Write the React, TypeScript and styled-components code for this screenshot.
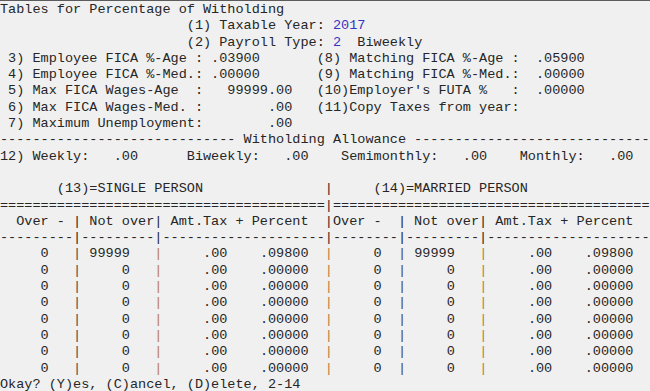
import React from 'react';
import styled, { createGlobalStyle } from 'styled-components';

type Seg = string | { t: string; kind: 'value' | 'pipe' | 'tint' };

const GlobalStyle = createGlobalStyle`
  html, body {
    margin: 0;
    padding: 0;
    background: #f0f0f0;
  }
`;

const Screen = styled.div`
  width: 650px;
  height: 391px;
  box-sizing: border-box;
  padding-top: 1px;
  border-top: 1px solid #5c5c5c;
  background: #f0f0f0;
  overflow: hidden;
  font-family: "Liberation Mono", "Courier New", monospace;
  font-size: 13.54px;
  line-height: 16.3px;
  color: #262626;
`;

const Line = styled.div`
  white-space: pre;
  height: 16.3px;
`;

const Value = styled.span`
  color: #3535c4;
`;

const Bar = styled.span<{ $tint?: boolean }>`
  color: ${p => (p.$tint ? '#b87a42' : '#4a4a4a')};
`;

const pad = (s: string, n: number) => s.padEnd(n, ' ');

const dataRow = (notOver: string, rate: string): Seg[] => {
  const amt = '     .00    ' + rate;
  return [
    '     0   ',
    { t: '|', kind: 'pipe' },
    ' ' + pad(notOver.padStart(5, ' '), 8),
    { t: '|', kind: 'tint' },
    pad(amt, 20),
    { t: '|', kind: 'tint' },
    '     0  ',
    { t: '|', kind: 'pipe' },
    ' ' + pad(notOver.padStart(5, ' '), 8),
    { t: '|', kind: 'tint' },
    amt,
  ];
};

const lines: Seg[][] = [
  ['Tables for Percentage of Witholding'],
  [pad('', 23) + '(1) Taxable Year: ', { t: '2017', kind: 'value' }],
  [pad('', 23) + '(2) Payroll Type: ', { t: '2', kind: 'value' }, '  Biweekly'],
  [pad(' 3) Employee FICA %-Age : .03900', 39) + '(8) Matching FICA %-Age :  .05900'],
  [pad(' 4) Employee FICA %-Med.: .00000', 39) + '(9) Matching FICA %-Med.:  .00000'],
  [pad(' 5) Max FICA Wages-Age  :   99999.00', 39) + "(10)Employer's FUTA %   :  .00000"],
  [pad(' 6) Max FICA Wages-Med. :        .00', 39) + '(11)Copy Taxes from year:'],
  [' 7) Maximum Unemployment:        .00'],
  ['-'.repeat(29) + ' Witholding Allowance ' + '-'.repeat(29)],
  [
    pad(pad(pad('12) Weekly:   .00', 23) + 'Biweekly:   .00', 42) + 'Semimonthly:   .00', 64) +
      'Monthly:   .00',
  ],
  [''],
  [pad(pad('       (13)=SINGLE PERSON', 40) + '|', 46) + '(14)=MARRIED PERSON'],
  ['='.repeat(40) + '|' + '='.repeat(39)],
  ['  Over - | Not over| Amt.Tax + Percent  |Over -  | Not over| Amt.Tax + Percent'],
  ['-'.repeat(9) + '|' + '-'.repeat(9) + '|' + '-'.repeat(20) + '|' + '-'.repeat(8) + '|' + '-'.repeat(9) + '|' + '-'.repeat(20)],
  dataRow('99999', '.09800'),
  ...Array.from({ length: 7 }, () => dataRow('0', '.00000')),
  ['Okay? (Y)es, (C)ancel, (D)elete, 2-14'],
];

function renderSeg(seg: Seg, i: number) {
  if (typeof seg === 'string') return <React.Fragment key={i}>{seg}</React.Fragment>;
  if (seg.kind === 'value') return <Value key={i}>{seg.t}</Value>;
  return <Bar key={i} $tint={seg.kind === 'tint'}>{seg.t}</Bar>;
}

export default function App() {
  return (
    <>
      <GlobalStyle />
      <Screen>
        {lines.map((segs, i) => (
          <Line key={i}>{segs.map(renderSeg)}</Line>
        ))}
      </Screen>
    </>
  );
}
